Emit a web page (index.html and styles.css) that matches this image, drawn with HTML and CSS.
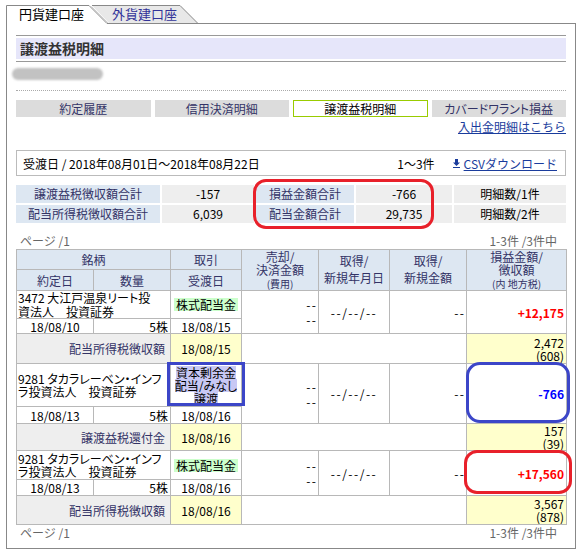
FILE: index.html
```html
<!DOCTYPE html>
<html lang="ja">
<head>
<meta charset="utf-8">
<title>譲渡益税明細</title>
<link rel="stylesheet" href="styles.css">
</head>
<body>
<div class="page">
  <div class="tabbar">
    <svg class="tabshape" width="570" height="19" viewBox="0 0 570 19">
      <path d="M86 0.5 H174 L192.5 19 H104 Z" fill="#e8e8e8"/>
      <path d="M86 0.5 H174 L192.5 19" fill="none" stroke="#888"/>
      <path d="M0.5 19 V0.5 H83 L101.5 19 Z" fill="#fff"/>
      <path d="M85.5 1.5 L103 19" fill="none" stroke="#cfcfcf"/>
      <path d="M0.5 19 V0.5 H83 L101 18.5" fill="none" stroke="#888"/>
      <path d="M101 18.5 H570" fill="none" stroke="#888"/>
    </svg>
    <div class="tabs">
      <span class="tab-active">円貨建口座</span>
      <span class="tab">外貨建口座</span>
    </div>
  </div>
  <div class="panel">
    <div class="title"><h1>譲渡益税明細</h1></div>
    <div class="blur"></div>
    <div class="dotted"></div>
    <div class="buttons">
      <div class="btn">約定履歴</div>
      <div class="btn">信用決済明細</div>
      <div class="btn btn-on">譲渡益税明細</div>
      <div class="btn">カバードワラント損益</div>
    </div>
    <div class="linkrow"><a class="link" href="#">入出金明細はこちら</a></div>
    <div class="datebox">
      <span>受渡日 / 2018年08月01日～2018年08月22日</span>
      <span class="count">1～3件</span>
      <a class="csv" href="#"><svg class="dl" width="7" height="9" viewBox="0 0 7 9"><path d="M2 0h3v3.5h2L3.5 7 0 3.5h2z M0 8h7v1H0z" fill="#1a3c9c"/></svg><span class="link">CSVダウンロード</span></a>
    </div>
    <div class="summary">
      <div class="lab">譲渡益税徴収額合計</div>
      <div class="val">-157</div>
      <div class="lab">損益金額合計</div>
      <div class="val">-766</div>
      <div class="val">明細数/1件</div>
      <div class="lab">配当所得税徴収額合計</div>
      <div class="val">6,039</div>
      <div class="lab">配当金額合計</div>
      <div class="val">29,735</div>
      <div class="val">明細数/2件</div>
    </div>
    <div class="pager pager-top"><span>ページ /1</span><span>1-3件 /3件中</span></div>
    <table class="detail">
      <colgroup>
        <col class="w77"><col class="w77"><col class="w71"><col class="w77"><col class="w71"><col class="w77"><col class="w100">
      </colgroup>
      <thead>
        <tr class="hr1">
          <th colspan="2">銘柄</th>
          <th>取引</th>
          <th rowspan="2" class="three">売却/<br>決済金額<br><small>(費用)</small></th>
          <th rowspan="2" class="two">取得/<br>新規年月日</th>
          <th rowspan="2" class="two">取得/<br>新規金額</th>
          <th rowspan="2" class="three">損益金額/<br>徴収額<br><small>(内 地方税)</small></th>
        </tr>
        <tr class="hr2"><th>約定日</th><th>数量</th><th>受渡日</th></tr>
      </thead>
      <tbody>
        <tr class="ra1">
          <td colspan="2" class="name">3472 大江戸温泉リート投<br>資法人　投資証券</td>
          <td class="c"><span class="hl-g">株式配当金</span></td>
          <td rowspan="2" class="r dash dash2">--<br>--</td>
          <td rowspan="2" class="c dash">--/--/--</td>
          <td rowspan="2" class="r dash">--</td>
          <td rowspan="2" class="r plus">+12,175</td>
        </tr>
        <tr class="ra2"><td class="c">18/08/10</td><td class="r">5株</td><td class="c">18/08/15</td></tr>
        <tr class="ra3">
          <td colspan="2" class="sub">配当所得税徴収額</td>
          <td class="c ydate">18/08/15</td>
          <td colspan="3"></td>
          <td class="r yv">2,472<br>(608)</td>
        </tr>
        <tr class="rb1">
          <td colspan="2" class="name">9281 タカラレーベン・インフ<br>ラ投資法人　投資証券</td>
          <td class="c"><span class="hl-b">資本剰余金</span><br><span class="hl-b">配当/みなし</span><br><span class="hl-b">譲渡</span></td>
          <td rowspan="2" class="r dash dash2">--<br>--</td>
          <td rowspan="2" class="c dash">--/--/--</td>
          <td rowspan="2" class="r dash">--</td>
          <td rowspan="2" class="r minus">-766</td>
        </tr>
        <tr class="rb2"><td class="c">18/08/13</td><td class="r">5株</td><td class="c">18/08/16</td></tr>
        <tr class="rb3">
          <td colspan="2" class="sub">譲渡益税還付金</td>
          <td class="c ydate">18/08/16</td>
          <td colspan="3"></td>
          <td class="r yv">157<br>(39)</td>
        </tr>
        <tr class="rc1">
          <td colspan="2" class="name">9281 タカラレーベン・インフ<br>ラ投資法人　投資証券</td>
          <td class="c"><span class="hl-g">株式配当金</span></td>
          <td rowspan="2" class="r dash dash2">--<br>--</td>
          <td rowspan="2" class="c dash">--/--/--</td>
          <td rowspan="2" class="r dash">--</td>
          <td rowspan="2" class="r plus">+17,560</td>
        </tr>
        <tr class="rc2"><td class="c">18/08/13</td><td class="r">5株</td><td class="c">18/08/16</td></tr>
        <tr class="rc3">
          <td colspan="2" class="sub">配当所得税徴収額</td>
          <td class="c ydate">18/08/16</td>
          <td colspan="3"></td>
          <td class="r yv">3,567<br>(878)</td>
        </tr>
      </tbody>
    </table>
    <div class="pager pager-bottom"><span>ページ /1</span><span>1-3件 /3件中</span></div>
  </div>

  <div class="mark ring-red ring-sum"></div>
  <div class="mark box-blue"></div>
  <div class="mark ring-blue"></div>
  <div class="mark ring-red ring-pl"></div>
</div>
</body>
</html>
```
FILE: styles.css
```css
* { box-sizing: border-box; }
html, body { margin: 0; padding: 0; background: #fff; }
body {
  font-family: "Noto Sans CJK JP", sans-serif;
  font-size: 12px;
  color: #000;
}
.page {
  position: relative;
  width: 581px;
  height: 555px;
  padding: 5px 0 0 6px;
}

/* tabs */
.tabbar { position: relative; width: 570px; height: 19px; }
.tabshape { position: absolute; left: 0; top: 0; }
.tabs {
  position: relative;
  display: flex;
  padding-left: 13px;
  font-size: 13px;
  line-height: 18px;
}
.tab-active { color: #000; }
.tab { color: #333399; margin-left: 28px; }

/* panel */
.panel {
  width: 570px;
  height: 525px;
  border: 1px solid #888;
  border-top: 0;
  padding: 11px 9px 0;
}
.title {
  border-top: 1px solid #999;
  border-bottom: 1px solid #999;
  padding: 2px 0;
}
.title h1 {
  margin: 0;
  height: 21px;
  background: #e6e6fa;
  font-size: 14px;
  font-weight: bold;
  line-height: 21px;
  padding-left: 4px;
  color: #333;
}
.blur {
  margin: 6px 0 0 -4px;
  width: 91px;
  height: 12px;
  background: #c2c2c2;
  border-radius: 6px;
  filter: blur(1px);
}
.dotted {
  margin-top: 10px;
  border-top: 1px dotted #aaa;
}
.buttons {
  margin-top: 9px;
  display: grid;
  grid-template-columns: repeat(4, 1fr);
  column-gap: 4px;
}
.btn {
  height: 17px;
  line-height: 17px;
  background: #dcdcdc;
  color: #333366;
  text-align: center;
  font-feature-settings: "palt";
}
.btn-on {
  background: #fff;
  border: 1px solid #99cc00;
  line-height: 15px;
  color: #000;
}
.linkrow {
  margin-top: 3px;
  height: 14px;
  line-height: 14px;
  text-align: right;
}
.link { color: #1a3c9c; text-decoration: underline; }

.datebox {
  margin-top: 16px;
  height: 26px;
  border: 1px solid #bbb;
  display: flex;
  align-items: center;
  padding: 0 8px 0 6px;
}
.count { margin-left: auto; }
.csv {
  margin-left: 18px;
  display: flex;
  align-items: center;
  gap: 4px;
  text-decoration: none;
}
.dl { display: block; }

.summary {
  margin-top: 9px;
  display: grid;
  grid-template-columns: 144px 92px 98px 96px 112px;
  grid-auto-rows: 18px;
  gap: 2px;
}
.summary > div { line-height: 18px; text-align: center; }
.lab { background: #dde7f2; color: #333366; }
.val { background: #eeeeee; }

.pager {
  display: flex;
  justify-content: space-between;
  color: #666;
  padding: 0 9px 0 4px;
  line-height: 13px;
}
.pager-top { height: 26px; align-items: flex-end; padding-bottom: 2px; }
.pager-bottom { height: 14px; padding-top: 1px; }

/* detail table */
.detail {
  width: 550px;
  table-layout: fixed;
  border-collapse: collapse;
  line-height: 13px;
}
.w77 { width: 77px; }
.w71 { width: 71px; }
.w100 { width: 100px; }
.detail th, .detail td {
  border: 1px solid #b8b8b8;
  padding: 0 1px;
  vertical-align: middle;
  white-space: nowrap;
  overflow: hidden;
}
.detail th {
  background: #dde7f2;
  color: #333366;
  font-weight: normal;
  text-align: center;
}
.detail th.three { line-height: 13px; }
.detail th.two { line-height: 17px; padding-bottom: 3px; }
.detail th small { font-size: 10px; }
.hr1 { height: 20px; }
.hr2 { height: 21px; }
.ra1 { height: 28px; }
.ra2 { height: 15px; }
.ra3 { height: 30px; }
.rb1 { height: 43px; }
.rb2 { height: 17px; }
.rb3 { height: 27px; }
.rc1 { height: 29px; }
.rc2 { height: 16px; }
.rc3 { height: 29px; }

.detail td.c { text-align: center; }
.detail td.r { text-align: right; padding-right: 2px; }
.detail td.name {
  text-align: left;
  padding-left: 1px;
  line-height: 13.5px;
  font-feature-settings: "palt";
}
.detail td.dash { letter-spacing: 1.5px; }
.detail td.r.dash { padding-right: 0.5px; }
.detail td.dash2 { line-height: 15px; }
.detail td.sub {
  background: #eeeeee;
  color: #333366;
  text-align: right;
  padding-right: 5px;
}
.detail td.ydate, .detail td.yv { background: #ffffcc; }
.plus { color: #ff0000; font-weight: bold; }
.minus { color: #0000ff; font-weight: bold; }
.hl-g {
  display: inline-block;
  background: #ccffcc;
  line-height: 13px;
  padding: 0 2px;
}
.hl-b {
  display: inline-block;
  background: #c8c8f4;
  line-height: 13px;
  font-feature-settings: "palt";
}

/* annotation marks */
.mark { position: absolute; pointer-events: none; }
.ring-red { border: 3px solid #e8202a; border-radius: 13px; }
.ring-sum { left: 253px; top: 179px; width: 181px; height: 50px; }
.ring-pl { left: 464px; top: 450px; width: 108px; height: 44px; }
.box-blue {
  left: 167px; top: 362px; width: 78px; height: 44px;
  border: 3px solid #3c46c8;
}
.ring-blue {
  left: 466px; top: 362px; width: 104px; height: 61px;
  border: 3px solid #3c46c8;
  border-radius: 14px;
}
```
